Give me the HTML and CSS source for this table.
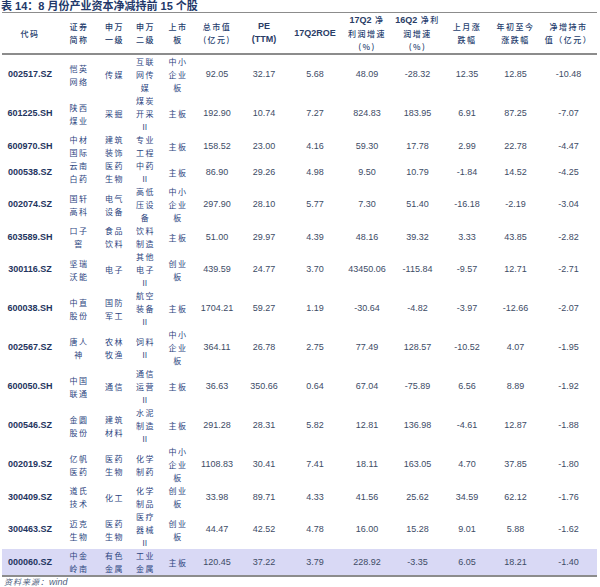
FILE: index.html
```html
<!DOCTYPE html>
<html lang="zh">
<head>
<meta charset="utf-8">
<link rel="stylesheet" href="styles.css">
</head>
<body>
<div class="title">表 14：8 月份产业资本净减持前 15 个股</div>
<table class="data">
<colgroup>
<col class="c1"><col class="c2"><col class="c3"><col class="c4"><col class="c5"><col class="c6"><col class="c7"><col class="c8"><col class="c9"><col class="c10"><col class="c11"><col class="c12"><col class="c13">
</colgroup>
<thead>
<tr>
<th class="zh">代码</th>
<th class="zh">证券<br>简称</th>
<th class="zh">申万<br>一级</th>
<th class="zh">申万<br>二级</th>
<th class="zh">上市<br>板</th>
<th class="zh">总市值<br>(亿元)</th>
<th class="en">PE<br>(TTM)</th>
<th class="en">17Q2ROE</th>
<th class="zh"><b class="en">17Q2</b> 净<br>利润增速<br>(%)</th>
<th class="zh"><b class="en">16Q2</b> 净利<br>润增速<br>(%)</th>
<th class="zh">上月涨<br>跌幅</th>
<th class="zh">年初至今<br>涨跌幅</th>
<th class="zh">净增持市<br>值（亿元）</th>
</tr>
</thead>
<tbody>
<tr><td class="code">002517.SZ</td><td class="zh">恺英<br>网络</td><td class="zh">传媒</td><td class="zh">互联<br>网传<br>媒</td><td class="zh">中小<br>企业<br>板</td><td>92.05</td><td>32.17</td><td>5.68</td><td>48.09</td><td>-28.32</td><td>12.35</td><td>12.85</td><td>-10.48</td></tr>
<tr><td class="code">601225.SH</td><td class="zh">陕西<br>煤业</td><td class="zh">采掘</td><td class="zh">煤炭<br>开采<br>Ⅱ</td><td class="zh">主板</td><td>192.90</td><td>10.74</td><td>7.27</td><td>824.83</td><td>183.95</td><td>6.91</td><td>87.25</td><td>-7.07</td></tr>
<tr><td class="code">600970.SH</td><td class="zh">中材<br>国际</td><td class="zh">建筑<br>装饰</td><td class="zh">专业<br>工程</td><td class="zh">主板</td><td>158.52</td><td>23.00</td><td>4.16</td><td>59.30</td><td>17.78</td><td>2.99</td><td>22.78</td><td>-4.47</td></tr>
<tr><td class="code">000538.SZ</td><td class="zh">云南<br>白药</td><td class="zh">医药<br>生物</td><td class="zh">中药<br>Ⅱ</td><td class="zh">主板</td><td>86.90</td><td>29.26</td><td>4.98</td><td>9.50</td><td>10.79</td><td>-1.84</td><td>14.52</td><td>-4.25</td></tr>
<tr><td class="code">002074.SZ</td><td class="zh">国轩<br>高科</td><td class="zh">电气<br>设备</td><td class="zh">高低<br>压设<br>备</td><td class="zh">中小<br>企业<br>板</td><td>297.90</td><td>28.10</td><td>5.77</td><td>7.30</td><td>51.40</td><td>-16.18</td><td>-2.19</td><td>-3.04</td></tr>
<tr><td class="code">603589.SH</td><td class="zh">口子<br>窖</td><td class="zh">食品<br>饮料</td><td class="zh">饮料<br>制造</td><td class="zh">主板</td><td>51.00</td><td>29.97</td><td>4.39</td><td>48.16</td><td>39.32</td><td>3.33</td><td>43.85</td><td>-2.82</td></tr>
<tr><td class="code">300116.SZ</td><td class="zh">坚瑞<br>沃能</td><td class="zh">电子</td><td class="zh">其他<br>电子<br>Ⅱ</td><td class="zh">创业<br>板</td><td>439.59</td><td>24.77</td><td>3.70</td><td>43450.06</td><td>-115.84</td><td>-9.57</td><td>12.71</td><td>-2.71</td></tr>
<tr><td class="code">600038.SH</td><td class="zh">中直<br>股份</td><td class="zh">国防<br>军工</td><td class="zh">航空<br>装备<br>Ⅱ</td><td class="zh">主板</td><td>1704.21</td><td>59.27</td><td>1.19</td><td>-30.64</td><td>-4.82</td><td>-3.97</td><td>-12.66</td><td>-2.07</td></tr>
<tr><td class="code">002567.SZ</td><td class="zh">唐人<br>神</td><td class="zh">农林<br>牧渔</td><td class="zh">饲料<br>Ⅱ</td><td class="zh">中小<br>企业<br>板</td><td>364.11</td><td>26.78</td><td>2.75</td><td>77.49</td><td>128.57</td><td>-10.52</td><td>4.07</td><td>-1.95</td></tr>
<tr><td class="code">600050.SH</td><td class="zh">中国<br>联通</td><td class="zh">通信</td><td class="zh">通信<br>运营<br>Ⅱ</td><td class="zh">主板</td><td>36.63</td><td>350.66</td><td>0.64</td><td>67.04</td><td>-75.89</td><td>6.56</td><td>8.89</td><td>-1.92</td></tr>
<tr><td class="code">000546.SZ</td><td class="zh">金圆<br>股份</td><td class="zh">建筑<br>材料</td><td class="zh">水泥<br>制造<br>Ⅱ</td><td class="zh">主板</td><td>291.28</td><td>28.31</td><td>5.82</td><td>12.81</td><td>136.98</td><td>-4.61</td><td>12.87</td><td>-1.88</td></tr>
<tr><td class="code">002019.SZ</td><td class="zh">亿帆<br>医药</td><td class="zh">医药<br>生物</td><td class="zh">化学<br>制药</td><td class="zh">中小<br>企业<br>板</td><td>1108.83</td><td>30.41</td><td>7.41</td><td>18.11</td><td>163.05</td><td>4.70</td><td>37.85</td><td>-1.80</td></tr>
<tr><td class="code">300409.SZ</td><td class="zh">道氏<br>技术</td><td class="zh">化工</td><td class="zh">化学<br>制品</td><td class="zh">创业<br>板</td><td>33.98</td><td>89.71</td><td>4.33</td><td>41.56</td><td>25.62</td><td>34.59</td><td>62.12</td><td>-1.76</td></tr>
<tr><td class="code">300463.SZ</td><td class="zh">迈克<br>生物</td><td class="zh">医药<br>生物</td><td class="zh">医疗<br>器械<br>Ⅱ</td><td class="zh">创业<br>板</td><td>44.47</td><td>42.52</td><td>4.78</td><td>16.00</td><td>15.28</td><td>9.01</td><td>5.88</td><td>-1.62</td></tr>
<tr class="hl"><td class="code">000060.SZ</td><td class="zh">中金<br>岭南</td><td class="zh">有色<br>金属</td><td class="zh">工业<br>金属</td><td class="zh">主板</td><td>120.45</td><td>37.22</td><td>3.79</td><td>228.92</td><td>-3.35</td><td>6.05</td><td>18.21</td><td>-1.40</td></tr>
</tbody>
</table>
<div class="source"><span class="srczh">资料来源：</span>wind</div>
</body>
</html>
```
FILE: styles.css
```css
html, body {
  margin: 0;
  padding: 0;
  background: #ffffff;
}
body {
  font-family: "Liberation Sans", Arial, "Noto Sans CJK SC", sans-serif;
  width: 600px;
}
.title {
  height: 12px;
  line-height: 12px;
  padding-left: 1px;
  font-family: "Liberation Sans", "Noto Sans CJK SC", sans-serif;
  font-size: 11px;
  font-weight: bold;
  color: #22386a;
  white-space: nowrap;
}
.data {
  margin-left: 2px;
  width: 595px;
  table-layout: fixed;
  border-collapse: separate;
  border-spacing: 0;
}
.c1 { width: 56px; }
.c2 { width: 42px; }
.c3 { width: 29px; }
.c4 { width: 33px; }
.c5 { width: 32px; }
.c6 { width: 46px; }
.c7 { width: 48px; }
.c8 { width: 54px; }
.c9 { width: 50px; }
.c10 { width: 51px; }
.c11 { width: 48px; }
.c12 { width: 49px; }
.c13 { width: 57px; }
th, td {
  padding: 0;
  text-align: center;
  vertical-align: middle;
  line-height: 13px;
  white-space: nowrap;
  overflow: visible;
}
th {
  border-top: 1px solid #8c8c8c;
  border-bottom: 2px solid #8c8c8c;
  height: 39px;
  color: #26406e;
  font-weight: bold;
}
th.en {
  font-family: "Liberation Sans", Arial, sans-serif;
  font-size: 9px;
  color: #2a3d66;
}
th.zh {
  font-family: "Noto Sans CJK SC", sans-serif;
  font-size: 8px;
  letter-spacing: 1.5px;
  font-weight: 500;
}
th b.en {
  font-family: "Liberation Sans", Arial, sans-serif;
  font-size: 9px;
  font-weight: bold;
  letter-spacing: 0;
  color: #2a3d66;
}
td {
  font-size: 9px;
  color: #3d4b66;
}
td.code {
  font-weight: bold;
  color: #1f3560;
}
td.zh {
  font-family: "Noto Sans CJK SC", sans-serif;
  font-size: 8px;
  letter-spacing: 1.5px;
  color: #2c4580;
}
tr.hl td {
  background: #d9d9f5;
}
tbody tr:last-child td {
  border-bottom: 2px solid #8c8c8c;
}
.source {
  padding-left: 4px;
  height: 10px;
  line-height: 10px;
  font-size: 9px;
  font-style: italic;
  color: #4f5f80;
  white-space: nowrap;
}
.srczh {
  font-family: "Noto Sans CJK SC", sans-serif;
  font-size: 8px;
  letter-spacing: 1px;
}
```
